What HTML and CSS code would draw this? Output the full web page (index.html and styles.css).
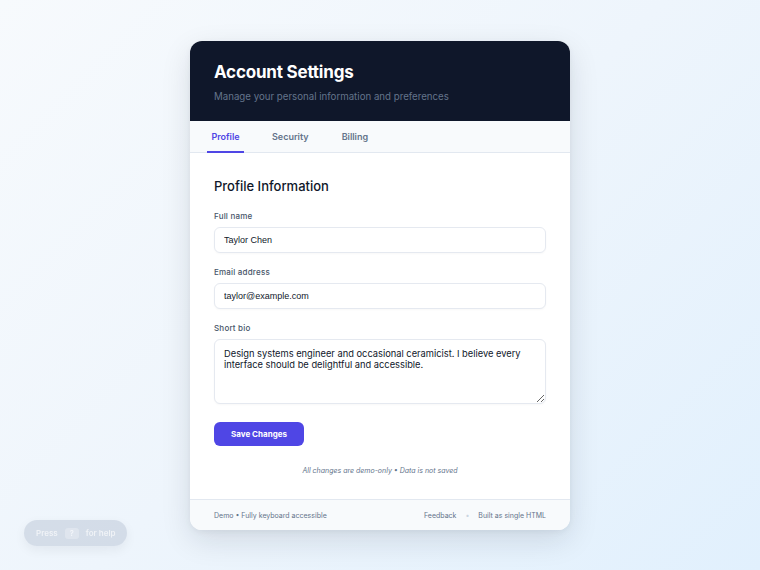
FILE: index.html
```html
<!DOCTYPE html>
<html lang="en">
<head>
<meta charset="UTF-8" />
<meta name="viewport" content="width=device-width, initial-scale=1" />
<title>Account Settings</title>
<link rel="stylesheet" href="styles.css">
</head>
<body>

<div class="card">
  <div class="card-header">
    <h1>Account Settings</h1>
    <p>Manage your personal information and preferences</p>
  </div>

  <nav class="tabs">
    <a href="#" class="tab active">Profile</a>
    <a href="#" class="tab">Security</a>
    <a href="#" class="tab">Billing</a>
  </nav>

  <form class="card-body" onsubmit="return false">
    <h2>Profile Information</h2>

    <label class="field">
      <span>Full name</span>
      <input type="text" value="Taylor Chen" />
    </label>

    <label class="field">
      <span>Email address</span>
      <input type="email" value="taylor@example.com" />
    </label>

    <label class="field">
      <span>Short bio</span>
      <textarea>Design systems engineer and occasional ceramicist. I believe every interface should be delightful and accessible.</textarea>
    </label>

    <button type="submit" class="btn-save">Save Changes</button>

    <p class="note">All changes are demo-only • Data is not saved</p>
  </form>

  <div class="card-footer">
    <span>Demo • Fully keyboard accessible</span>
    <span class="links">
      <a href="#">Feedback</a>
      <span class="dot">•</span>
      <a href="#">Built as single HTML</a>
    </span>
  </div>
</div>

<div class="help-pill">Press <kbd>?</kbd> for help</div>

</body>
</html>
```

FILE: styles.css
```css
html,
body {
  height: 100%;
}
body {
  margin: 0;
  font-family: Inter, "Liberation Sans", sans-serif;
  background: linear-gradient(135deg, #f7fafd 0%, #eef5fc 50%, #e1f0fd 100%);
  color: #0f172a;
}
.card {
  width: 380px;
  margin: 41px auto 0;
  background: #fff;
  border-radius: 12px;
  overflow: hidden;
  box-shadow: 0 10px 30px rgba(15, 23, 42, 0.12), 0 2px 6px rgba(15, 23, 42, 0.05);
}
.card-header {
  background: #0f172a;
  padding: 20px 24px 18px;
}
.card-header h1 {
  margin: 0;
  font-size: 17px;
  font-weight: 700;
  color: #fff;
  letter-spacing: -0.2px;
  line-height: 22px;
}
.card-header p {
  margin: 8px 0 0;
  font-size: 9.7px;
  color: #64748b;
  line-height: 12px;
}
.tabs {
  display: flex;
  padding: 0 17px;
  height: 31px;
  background: #f8fafc;
  border-bottom: 1px solid #e2e8f0;
}
.tab {
  display: flex;
  align-items: center;
  justify-content: center;
  font-size: 9px;
  font-weight: 600;
  color: #64748b;
  text-decoration: none;
  border-bottom: 2px solid transparent;
  margin-bottom: -1px;
  padding-top: 1px;
}
.tab.active {
  width: 37px;
  margin-right: 28px;
  color: #4f46e5;
  border-bottom-color: #4f46e5;
}
.tab + .tab {
  margin-right: 33px;
}
.card-body {
  display: flex;
  flex-direction: column;
  padding: 24px 24px 23px;
}
.card-body h2 {
  margin: 0 0 14px;
  font-size: 13px;
  font-weight: 500;
  line-height: 19px;
  color: #0f172a;
}
.field {
  display: flex;
  flex-direction: column;
  margin-bottom: 13px;
}
.field span {
  font-size: 8px;
  font-weight: 500;
  color: #475569;
  letter-spacing: 0.2px;
  line-height: 12px;
  margin-bottom: 5px;
}
.field input,
.field textarea {
  box-sizing: border-box;
  width: 100%;
  border: 1px solid #e5e9f0;
  border-radius: 6px;
  background: #fff;
  color: #0f172a;
  outline: none;
  box-shadow: 0 1px 2px rgba(15, 23, 42, 0.03);
}
.field input {
  height: 26px;
  padding: 0 9px;
  font-family: "Liberation Sans", Arial, sans-serif;
  font-size: 9px;
}
.field textarea {
  height: 65px;
  padding: 8px 9px;
  font-family: Inter, "Liberation Sans", sans-serif;
  font-size: 9.3px;
  line-height: 11px;
  resize: vertical;
}
.btn-save {
  align-self: flex-start;
  width: 90px;
  height: 24px;
  margin-top: 5px;
  border: 0;
  border-radius: 6px;
  background: #4f46e5;
  color: #fff;
  font-family: Inter, "Liberation Sans", sans-serif;
  font-size: 8px;
  font-weight: 700;
  cursor: pointer;
}
.note {
  margin: 20px 0 0;
  text-align: center;
  font-size: 7px;
  font-style: italic;
  color: #64748b;
  line-height: 10px;
}
.card-footer {
  display: flex;
  justify-content: space-between;
  align-items: center;
  height: 30px;
  padding: 0 24px;
  background: #f8fafc;
  border-top: 1px solid #e2e8f0;
  font-size: 7px;
  color: #64748b;
}
.card-footer .links {
  display: flex;
  gap: 9px;
}
.card-footer a {
  color: #64748b;
  text-decoration: none;
}
.card-footer .dot {
  color: #cbd5e1;
}
.help-pill {
  position: fixed;
  left: 24px;
  bottom: 24px;
  display: flex;
  align-items: center;
  gap: 7px;
  height: 26px;
  padding: 0 12px;
  border-radius: 13px;
  background: rgba(148, 163, 184, 0.3);
  color: rgba(255, 255, 255, 0.65);
  font-size: 8px;
  font-weight: 600;
  box-shadow: 0 4px 12px rgba(15, 23, 42, 0.06);
}
.help-pill kbd {
  font-family: Inter, "Liberation Sans", sans-serif;
  font-size: 7.5px;
  padding: 1px 5px;
  border-radius: 3px;
  background: rgba(255, 255, 255, 0.25);
}
```
